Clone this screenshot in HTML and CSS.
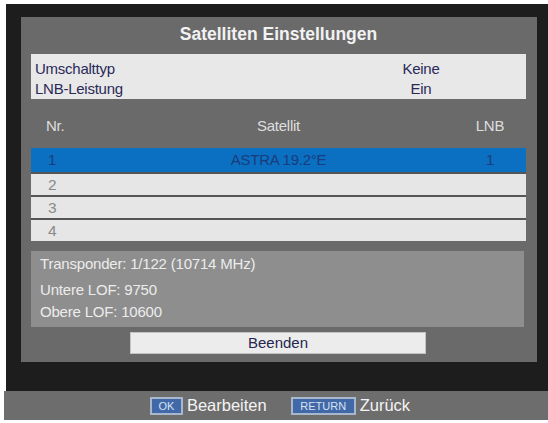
FILE: index.html
```html
<!DOCTYPE html>
<html lang="de">
<head>
<meta charset="utf-8">
<title>Satelliten Einstellungen</title>
<link rel="stylesheet" href="styles.css">
</head>
<body>
<div class="screen">
  <div class="panel">
    <div class="title">Satelliten Einstellungen</div>
    <div class="settings">
      <div class="setting-row"><span>Umschalttyp</span><span class="val">Keine</span><span></span></div>
      <div class="setting-row"><span>LNB-Leistung</span><span class="val">Ein</span><span></span></div>
    </div>
    <div class="cols header"><span class="c-nr">Nr.</span><span class="c-sat">Satellit</span><span class="c-lnb">LNB</span></div>
    <div class="list">
      <div class="cols row sel"><span class="c-nr">1</span><span class="c-sat">ASTRA 19.2°E</span><span class="c-lnb">1</span></div>
      <div class="cols row"><span class="c-nr">2</span><span class="c-sat"></span><span class="c-lnb"></span></div>
      <div class="cols row"><span class="c-nr">3</span><span class="c-sat"></span><span class="c-lnb"></span></div>
      <div class="cols row"><span class="c-nr">4</span><span class="c-sat"></span><span class="c-lnb"></span></div>
    </div>
    <div class="info">
      <div class="info-line">Transponder: 1/122 (10714 MHz)</div>
      <div class="info-line gap">Untere LOF: 9750</div>
      <div class="info-line">Obere LOF: 10600</div>
    </div>
    <div class="button">Beenden</div>
  </div>
</div>
<div class="bottombar">
  <span class="key key-ok">OK</span><span class="label">Bearbeiten</span>
  <span class="key key-ret">RETURN</span><span class="label">Zurück</span>
</div>
</body>
</html>
```
FILE: styles.css
```css
html, body {
  margin: 0;
  padding: 0;
  background: #ffffff;
  font-family: "Liberation Sans", Arial, sans-serif;
}
.screen {
  margin: 4px 0 0 6px;
  height: 387px;
  background: #1d1d1d;
  padding: 13px 11px 0 15px;
  box-sizing: border-box;
}
.panel {
  height: 345px;
  background: #6a6a6a;
  padding: 0 11px 0 10px;
  box-sizing: border-box;
  display: flex;
  flex-direction: column;
}
.title {
  height: 37px;
  line-height: 34px;
  text-align: center;
  font-weight: bold;
  font-size: 17.5px;
  color: #f2f2f2;
}
.settings {
  background: #e8e8e8;
  height: 45px;
  padding: 5px 4px 0;
  box-sizing: border-box;
  color: #2a2a58;
  font-size: 15px;
  letter-spacing: -0.25px;
}
.setting-row {
  display: grid;
  grid-template-columns: 1fr 70px 66px;
  height: 20px;
  line-height: 20px;
}
.val { text-align: center; }
.cols {
  display: grid;
  grid-template-columns: 72px 1fr 72px;
  font-size: 15px;
  letter-spacing: -0.25px;
}
.c-nr { padding-left: 17px; }
.c-sat { text-align: center; }
.c-lnb { text-align: center; }
.header {
  color: #dedede;
  padding: 17px 0 12px;
  line-height: 20px;
}
.header .c-nr { padding-left: 15px; }
.list {
  display: flex;
  flex-direction: column;
  gap: 2px;
  background: #555555;
}
.row {
  background: #e6e6e6;
  color: #8a8a8a;
  height: 21px;
  line-height: 21px;
  font-size: 15.5px;
}
.row.sel {
  background: #0b70c2;
  color: #193c7c;
  height: 24px;
  line-height: 24px;
  font-size: 15px;
}
.info {
  margin: 10px 2px 0 0;
  height: 76px;
  background: #8e8e8e;
  padding: 2px 9px 0;
  box-sizing: border-box;
  color: #ececec;
  font-size: 15px;
  letter-spacing: -0.2px;
}
.info-line { line-height: 22px; }
.info-line.gap { margin-top: 4px; }
.button {
  margin: 5px 0 0 99px;
  width: 296px;
  height: 22px;
  background: #ececec;
  border: 1px solid #c4c4c4;
  box-sizing: border-box;
  text-align: center;
  line-height: 20px;
  color: #262650;
  font-size: 15px;
}
.bottombar {
  margin-left: 4px;
  height: 29px;
  background: #6d6d6d;
  display: flex;
  align-items: center;
  justify-content: center;
  padding-left: 8px;
  box-sizing: border-box;
}
.key {
  height: 18px;
  box-sizing: border-box;
  border: 2px solid #a9b7cc;
  background: #4169a8;
  color: #d6e2f2;
  font-size: 11px;
  line-height: 14px;
  text-align: center;
}
.key-ok { width: 33px; }
.key-ret { width: 65px; margin-left: 24px; }
.label {
  color: #f4f4f4;
  font-size: 16.5px;
  margin-left: 4px;
}
```
